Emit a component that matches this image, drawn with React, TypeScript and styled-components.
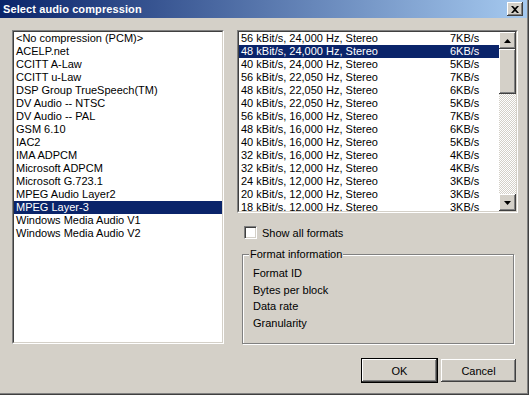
import React from 'react';
import styled, { createGlobalStyle } from 'styled-components';

const GlobalStyle = createGlobalStyle`
  html, body {
    margin: 0;
    padding: 0;
    background: #d4d0c8;
  }
  body {
    font-family: "Liberation Sans", Arial, sans-serif;
    font-size: 11px;
    color: #000;
  }
`;

const Window = styled.div`
  width: 529px;
  height: 395px;
  box-sizing: border-box;
  background: #d4d0c8;
  padding: 0 2px 2px 0;
  box-shadow: inset -1px -1px 0 #404040, inset -2px -2px 0 #808080;
  display: flex;
  flex-direction: column;
`;

const TitleBar = styled.div`
  height: 18px;
  flex: none;
  display: flex;
  align-items: center;
  justify-content: space-between;
  padding: 0 4px 0 3px;
  background: linear-gradient(to right, #0a246a, #a6caf0);
`;

const Title = styled.span`
  color: #fff;
  font-weight: bold;
  font-size: 11px;
  letter-spacing: 0.1px;
`;

const raised = `
  background: #d4d0c8;
  box-shadow: inset -1px -1px 0 #404040, inset 1px 1px 0 #fff,
    inset -2px -2px 0 #808080, inset 2px 2px 0 #d4d0c8;
`;

const CloseButton = styled.div`
  width: 16px;
  height: 14px;
  ${raised}
  display: flex;
  align-items: center;
  justify-content: center;
`;

const Body = styled.div`
  flex: 1;
  display: flex;
  flex-direction: column;
  padding: 12px 9px 0 12px;
`;

const Main = styled.div`
  display: flex;
  gap: 13px;
  height: 314px;
`;

const ListFrame = styled.div<{ $w: number; $h: number }>`
  width: ${(p) => p.$w}px;
  height: ${(p) => p.$h}px;
  box-sizing: border-box;
  flex: none;
  border: 1px solid;
  border-color: #808080 #fff #fff #808080;
`;

const ListInner = styled.div`
  height: 100%;
  box-sizing: border-box;
  border: 1px solid;
  border-color: #404040 #d4d0c8 #d4d0c8 #404040;
  background: #fff;
  overflow: hidden;
  display: flex;
`;

const Rows = styled.div`
  flex: 1;
  overflow: hidden;
`;

const Row = styled.div<{ $selected?: boolean }>`
  height: 13px;
  line-height: 13px;
  padding-left: 2px;
  white-space: nowrap;
  background: ${(p) => (p.$selected ? '#0a246a' : 'transparent')};
  color: ${(p) => (p.$selected ? '#fff' : '#000')};
`;

const FormatRow = styled(Row)`
  display: grid;
  grid-template-columns: 209px auto;
`;

const Scrollbar = styled.div`
  width: 17px;
  flex: none;
  display: flex;
  flex-direction: column;
`;

const ScrollButton = styled.div`
  height: 17px;
  flex: none;
  ${raised}
  display: flex;
  align-items: center;
  justify-content: center;
`;

const Thumb = styled.div`
  height: 45px;
  flex: none;
  ${raised}
`;

const Track = styled.div`
  flex: 1;
  background: repeating-conic-gradient(#fff 0 25%, #d4d0c8 0 50%) 0 0 / 2px 2px;
`;

const RightColumn = styled.div`
  flex: 1;
  display: flex;
  flex-direction: column;
`;

const CheckRow = styled.label`
  display: flex;
  align-items: center;
  gap: 5px;
  margin: 13px 0 0 7px;
  height: 13px;
`;

const CheckBox = styled.span`
  width: 13px;
  height: 13px;
  box-sizing: border-box;
  border: 1px solid;
  border-color: #808080 #fff #fff #808080;
  background: #fff;
  box-shadow: inset 1px 1px 0 #404040, inset -1px -1px 0 #d4d0c8;
`;

const GroupBox = styled.fieldset`
  flex: 1;
  margin: 9px 4px 0 5px;
  padding: 4px 0 0 10px;
  min-inline-size: 0;
  border: 1px solid #808080;
  box-shadow: 1px 1px 0 #fff, inset 1px 1px 0 #fff;
`;

const Legend = styled.legend`
  margin-left: -4px;
  padding: 0 1px;
  line-height: 13px;
  background: #d4d0c8;
`;

const InfoLine = styled.div`
  height: 16.5px;
  line-height: 16.5px;
`;

const Footer = styled.div`
  display: flex;
  justify-content: flex-end;
  align-items: center;
  gap: 3px;
  margin-top: 14px;
  padding-right: 2px;
`;

const Button = styled.div<{ $default?: boolean }>`
  width: ${(p) => (p.$default ? 77 : 75)}px;
  height: ${(p) => (p.$default ? 25 : 23)}px;
  box-sizing: border-box;
  display: flex;
  align-items: center;
  justify-content: center;
  ${raised}
  ${(p) =>
    p.$default &&
    `
    border: 1px solid #000;
  `}
`;

const codecs = [
  '<No compression (PCM)>',
  'ACELP.net',
  'CCITT A-Law',
  'CCITT u-Law',
  'DSP Group TrueSpeech(TM)',
  'DV Audio -- NTSC',
  'DV Audio -- PAL',
  'GSM 6.10',
  'IAC2',
  'IMA ADPCM',
  'Microsoft ADPCM',
  'Microsoft G.723.1',
  'MPEG Audio Layer2',
  'MPEG Layer-3',
  'Windows Media Audio V1',
  'Windows Media Audio V2',
];

const formats: [number, string, number][] = [
  [56, '24,000', 7],
  [48, '24,000', 6],
  [40, '24,000', 5],
  [56, '22,050', 7],
  [48, '22,050', 6],
  [40, '22,050', 5],
  [56, '16,000', 7],
  [48, '16,000', 6],
  [40, '16,000', 5],
  [32, '16,000', 4],
  [32, '12,000', 4],
  [24, '12,000', 3],
  [20, '12,000', 3],
  [18, '12,000', 3],
];

const Arrow = ({ up }: { up?: boolean }) => (
  <svg width="7" height="4" viewBox="0 0 7 4">
    <path d={up ? 'M3.5 0 L7 4 L0 4 Z' : 'M0 0 L7 0 L3.5 4 Z'} fill="#000" />
  </svg>
);

const App: React.FC = () => {
  return (
    <>
      <GlobalStyle />
      <Window>
        <TitleBar>
          <Title>Select audio compression</Title>
          <CloseButton>
            <svg width="8" height="7" viewBox="0 0 8 7">
              <path d="M0 0h2l2 2 2-2h2L5 3.5 8 7H6L4 5 2 7H0l3-3.5z" fill="#000" />
            </svg>
          </CloseButton>
        </TitleBar>
        <Body>
          <Main>
            <ListFrame $w={212} $h={314}>
              <ListInner>
                <Rows>
                  {codecs.map((c) => (
                    <Row key={c} $selected={c === 'MPEG Layer-3'}>
                      {c}
                    </Row>
                  ))}
                </Rows>
              </ListInner>
            </ListFrame>
            <RightColumn>
              <ListFrame $w={281} $h={183}>
                <ListInner>
                  <Rows>
                    {formats.map(([k, hz, kb], i) => (
                      <FormatRow key={i} $selected={i === 1}>
                        <span>{`${k} kBit/s, ${hz} Hz, Stereo`}</span>
                        <span>{`${kb}KB/s`}</span>
                      </FormatRow>
                    ))}
                  </Rows>
                  <Scrollbar>
                    <ScrollButton>
                      <Arrow up />
                    </ScrollButton>
                    <Thumb />
                    <Track />
                    <ScrollButton>
                      <Arrow />
                    </ScrollButton>
                  </Scrollbar>
                </ListInner>
              </ListFrame>
              <CheckRow>
                <CheckBox />
                Show all formats
              </CheckRow>
              <GroupBox>
                <Legend>Format information</Legend>
                <InfoLine>Format ID</InfoLine>
                <InfoLine>Bytes per block</InfoLine>
                <InfoLine>Data rate</InfoLine>
                <InfoLine>Granularity</InfoLine>
              </GroupBox>
            </RightColumn>
          </Main>
          <Footer>
            <Button $default>OK</Button>
            <Button>Cancel</Button>
          </Footer>
        </Body>
      </Window>
    </>
  );
};

export default App;
